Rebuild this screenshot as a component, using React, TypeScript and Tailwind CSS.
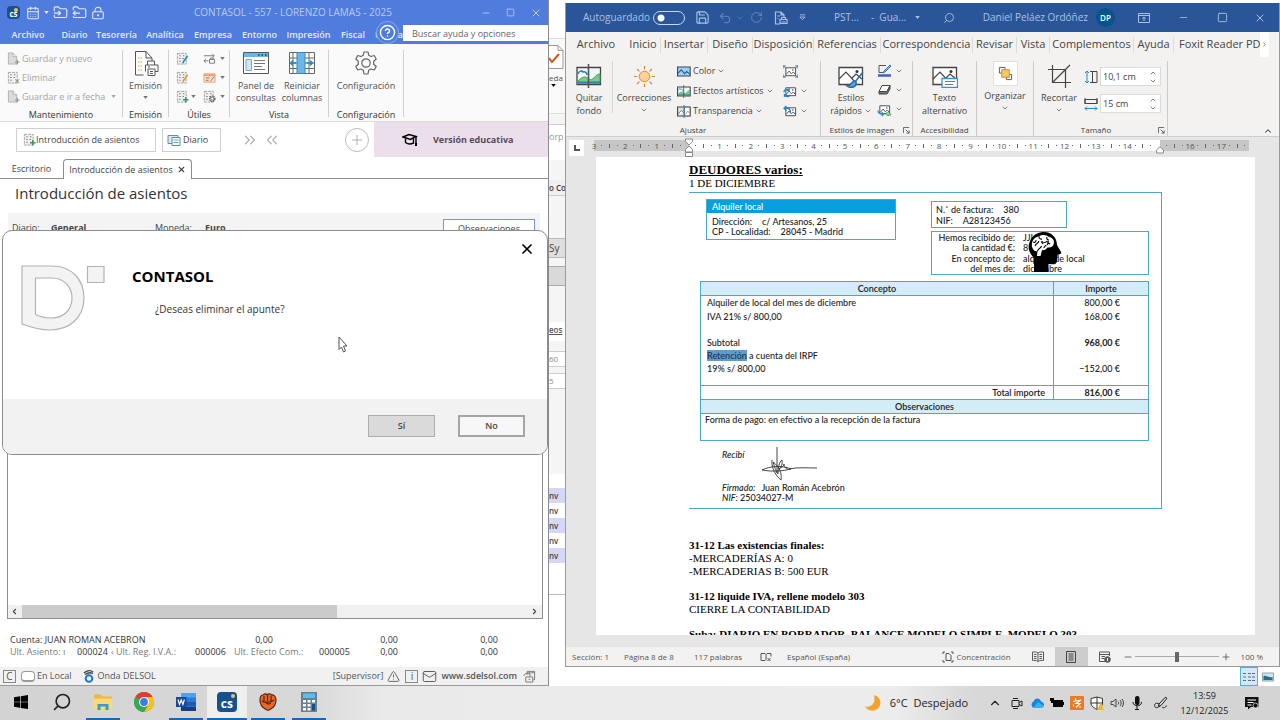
import type { ReactNode } from "react";
import {
  CalendarDays,
  ChevronDown,
  ChevronLeft,
  ChevronRight,
  ChevronUp,
  ChevronsLeft,
  ChevronsRight,
  CircleHelp,
  FolderInput,
  FolderOutput,
  LockKeyhole,
  Mail,
  Minus,
  Plus,
  RotateCw,
  Save,
  Search,
  Square,
  TriangleAlert,
  Undo2,
  X,
} from "lucide-react";

/* ---------- small drawings ---------- */

type IconProps = { className?: string };

function Caret({ className = "" }: IconProps) {
  return (
    <svg viewBox="0 0 6 4" className={`h-[3px] w-[5px] shrink-0 ${className}`} aria-hidden="true">
      <path d="M0 0h6L3 4z" fill="currentColor" />
    </svg>
  );
}

function CsLogo({ className = "" }: IconProps) {
  return (
    <span className={`relative flex shrink-0 items-end justify-center overflow-hidden bg-[#17518f] font-bold leading-none text-white ${className}`}>
      <span className="absolute right-0.5 top-0.5 size-1 rounded-full bg-[#f0c05a]" />
      cs
    </span>
  );
}

function PageIcon() {
  return (
    <svg viewBox="0 0 14 14" className="size-[13px] shrink-0" fill="none" aria-hidden="true">
      <path d="M1.500 1h5l4 4v8h-9z" fill="#dcdcdc" stroke="#b0b0b0" />
      <path d="M6.500 1v4h4" stroke="#b0b0b0" fill="#f4f4f4" />
      <path d="M11 8.500v5M8.500 11h5" stroke="#999" strokeWidth="1.400" />
    </svg>
  );
}

function SheetIcon({ mark }: { mark: "x" | "pen-blue" | "pen-orange" | "green" | "gear" }) {
  return (
    <svg viewBox="0 0 14 14" className="size-[13px] shrink-0" fill="none" aria-hidden="true">
      <path d="M1.500 1.500h9.500v11.500h-9.500z" stroke="#a0a0a0" fill="#f1f1f1" strokeDasharray="3 1" />
      <path d="M3.500 4h1.500M7.500 4h1.500M3.500 7h1.500M7 7h1.500M3.500 10h1.500" stroke="#777" strokeWidth="1.200" />
      {mark === "x" && <path d="M9 9l4 4M13 9l-4 4" stroke="#9a9a9a" strokeWidth="1.200" />}
      {mark === "pen-blue" && <path d="M12.500 4L8 10.500l-.5 1.500" stroke="#2b8fcd" strokeWidth="1.800" />}
      {mark === "pen-orange" && <path d="M12.500 4L8 10.500l-.5 1.500" stroke="#e19a3c" strokeWidth="1.800" />}
      {mark === "green" && <path d="M10.500 7.500v6M7.500 10.500h6" stroke="#2f9b5c" strokeWidth="1.600" />}
      {mark === "gear" && (
        <>
          <circle cx="10" cy="9.500" r="2.800" stroke="#666" strokeDasharray="1.400 .6" strokeWidth="1.600" />
          <circle cx="10" cy="9.500" r="1.600" stroke="#666" strokeWidth=".8" fill="#fff" />
        </>
      )}
    </svg>
  );
}

function SwapIcon() {
  return (
    <svg viewBox="0 0 14 12" className="h-3 w-[13px] shrink-0" fill="none" stroke="#777" aria-hidden="true">
      <path d="M1 2.500h11M10 .5l2 2-2 2M6 8H1M3 6L1 8l2 2M7 6.500h5.500v4H7zM8 6.500V5h3.500v1.500" />
    </svg>
  );
}

function CardIcon() {
  return (
    <svg viewBox="0 0 14 12" className="h-3 w-[13px] shrink-0" fill="none" aria-hidden="true">
      <path d="M1 1.500h12v9H1z" fill="#fbe3d0" stroke="#ec9f6c" />
      <path d="M1 2h12v2H1z" fill="#ec9f6c" />
      <path d="M3 6h4M3 8.500h3M8 9.500l4-5" stroke="#8a6d5c" />
    </svg>
  );
}

function EmissionIcon() {
  return (
    <svg viewBox="0 0 26 26" className="size-[26px]" fill="none" stroke="#555" aria-hidden="true">
      <path d="M10.500 25H2.500V1.500H13L19 8v3M13 1.500V8h6" />
      <path d="M5 8h4M5 12h5M5 16h4M5 20h4" stroke="#c4ad54" strokeDasharray="1.500 1" />
      <path d="M14.500 15v-4h7v4M12.500 21.500v-6.500h12.500v6.500h-3M15 19h7v6.500h-7z" fill="#fff" />
      <path d="M15 17h2M17 21.500h3M17 23.500h3" />
    </svg>
  );
}

function PanelIcon() {
  return (
    <svg viewBox="0 0 26 24" className="h-6 w-[26px]" fill="none" aria-hidden="true">
      <path d="M.5 1.500h25v21H.5z" fill="#fff" stroke="#555" />
      <path d="M1 2h24v4H1z" fill="#6db7e8" />
      <path d="M15 4h1.500M18.500 4H20M22 4h1.500" stroke="#234" strokeWidth="1.400" />
      <path d="M3 8.500h5.500v11H3z" fill="#cfe7f8" stroke="#7ab" />
      <path d="M11 9.500h11M11 12.500h11M11 15.500h8M11 18.500h11" stroke="#777" />
    </svg>
  );
}

function ColumnsIcon() {
  return (
    <svg viewBox="0 0 26 24" className="h-6 w-[26px]" fill="none" aria-hidden="true">
      <path d="M.5 1.500h25v21H.5zM.5 7h25M.5 12h25M.5 17.500h25M20 1.500v21M4 1.500v21" stroke="#666" fill="#fff" />
      <path d="M8 1.500h8v21H8z" fill="#6db7e8" stroke="#3489bd" />
      <path d="M7 12H1.500M4 9.500L1.500 12 4 14.500M17.500 12h6M21 9.500l2.500 2.500-2.500 2.500" stroke="#2487c8" strokeWidth="1.400" />
    </svg>
  );
}

function GearIcon() {
  return (
    <svg viewBox="0 0 24 24" className="size-6" fill="none" stroke="#666" strokeWidth="1.200" strokeLinejoin="round" aria-hidden="true">
      <path d="M10 1h4l.7 3.200 2.300 1.300 3.200-1 2 3.500-2.500 2.300v2.900l2.500 2.300-2 3.500-3.200-1-2.300 1.300L14 23h-4l-.7-3.700L7 18l-3.200 1-2-3.500 2.500-2.300v-2.900L1.800 8l2-3.500 3.200 1 2.300-1.300z" />
      <circle cx="12" cy="12" r="4.200" />
    </svg>
  );
}

function CapIcon() {
  return (
    <svg viewBox="0 0 16 14" className="h-3.5 w-4" fill="none" stroke="#000" aria-hidden="true">
      <path d="M1 4l6-2.500L14 3.500 8.500 6.500z" strokeWidth="1.500" />
      <path d="M3.500 5.500v4c2 1.500 5 2 8 .5V5.500M14 4v7" strokeWidth="1.400" />
      <path d="M13 10h2v3h-2z" fill="#000" stroke="none" />
    </svg>
  );
}

function PictureIcon({ variant }: { variant: "split" | "blue" | "half" | "grey" | "brush" | "alt" }) {
  const big = variant === "split" || variant === "brush" || variant === "alt";
  return (
    <svg viewBox="0 0 26 24" className={big ? "h-6 w-[26px]" : "h-[13px] w-3.5"} fill="none" aria-hidden="true">
      <path
        d="M1 3.500h23.500v17H1z"
        fill={variant === "blue" ? "#9dd0f2" : variant === "brush" || variant === "alt" ? "#fff" : variant === "grey" ? "#e2e2e2" : "#eef7fc"}
        stroke="#444"
        strokeWidth={big ? 1.3 : 2}
      />
      {(variant === "split" || variant === "half") && (
        <>
          <path d="M2 17c5-5 7-5 11-2s6-5 11-5v9H2z" fill="#7cc98a" stroke="#4a9c5c" />
          <path d="M2 10c1-3 4-4 5-2 2-1 4 1 4 3" stroke="#2b7cb8" strokeWidth="1.600" fill="#fff" />
          <path d="M2 18.500h22" stroke="#2b7cb8" strokeWidth="2" />
          <path d="M12.500 0v24" stroke="#555" strokeWidth="1.600" />
        </>
      )}
      {variant === "grey" && (
        <>
          <path d="M2 17l6-7 5 5M14 4h10v16H14z" fill="#fff" stroke="#666" strokeWidth="1.600" />
          <path d="M13 0v24" stroke="#2b7cb8" strokeWidth="2" />
          <path d="M16 17l4-6 3 4" stroke="#c78d61" strokeWidth="1.600" />
        </>
      )}
      {variant === "blue" && <path d="M2 15l6-6 6 7 4-4 6 5" stroke="#1d5f9c" strokeWidth="2" />}
      {(variant === "brush" || variant === "alt") && (
        <>
          <path d="M1 15l7-7 10 11M14 14l4-4 6 5" stroke="#444" strokeWidth="1.200" />
          <circle cx="19" cy="7.500" r="1.500" fill="#333" />
        </>
      )}
      {variant === "brush" && <path d="M25 8l-8 10M17 17c-4 0-3 5-8 5 4 3 10 1 9-4z" fill="#5aa3dc" stroke="#286fa8" strokeWidth="1.500" />}
      {variant === "alt" && (
        <>
          <path d="M10 14.500h15.500v9H10z" fill="#fff" stroke="#3c93c8" strokeWidth="1.300" />
          <path d="M13 17.500h10M13 20.500h8" stroke="#777" />
        </>
      )}
    </svg>
  );
}

function SmallPicture({ kind }: { kind: "compress" | "change" | "reset" | "layout" }) {
  return (
    <svg viewBox="0 0 16 14" className="h-[13px] w-[15px]" fill="none" aria-hidden="true">
      <path d="M3 3h10.500v8.500H3z" stroke="#444" fill="#fff" />
      <path d="M3.500 10l3-3.500 2.500 3 2-2 2 2.500" stroke="#555" />
      <circle cx="10.500" cy="5.500" r=".8" fill="#444" />
      {kind === "compress" && <path d="M0 1l3 2M16 1l-2.500 2M0 13l3-1.500M16 13l-2.500-1.500M0 4V1h3M13 1h3v3M0 10v3h3M16 10v3h-3" stroke="#2f7cb7" />}
      {kind === "change" && <path d="M1 8a3 3 0 015-2.500M7.500 10.500a3 3 0 01-5.500.5M6.500 3v3H4M1.500 13v-2.500H4" stroke="#2487c8" strokeWidth="1.400" />}
      {kind === "reset" && <path d="M1 3.500h3.500c3 0 3.500 2 3.500 5M3.500 1L1 3.500 3.500 6" stroke="#2487c8" strokeWidth="1.400" />}
      {kind === "layout" && (
        <>
          <path d="M1 8c0 3 3 4 6 4M5 10l2 2-2 2" stroke="#2487c8" strokeWidth="1.300" />
          <path d="M9 11.500c2-2 5-1 6 1-2 1.500-5 1-6-1z" fill="#a5dba8" stroke="#3f9a4c" />
        </>
      )}
    </svg>
  );
}

function SunIcon() {
  return (
    <svg viewBox="0 0 24 24" className="size-[23px]" fill="none" aria-hidden="true">
      <circle cx="12" cy="12" r="5.500" fill="#fbd68a" stroke="#d68a2c" />
      <path d="M12 1v3.500M12 19.500V23M1 12h3.500M19.500 12H23M4.200 4.200l2.500 2.500M17.300 17.300l2.500 2.500M4.200 19.800l2.500-2.500M17.300 6.700l2.500-2.500" stroke="#d9822b" strokeWidth="1.200" />
    </svg>
  );
}

function OutlinePen() {
  return (
    <svg viewBox="0 0 15 13" className="h-[13px] w-[15px]" fill="none" aria-hidden="true">
      <path d="M9 1.500H2v7h4" stroke="#555" />
      <path d="M13 1L7 7l-1 2 2-1 6-6z" fill="#8cc4ee" stroke="#2b78b8" />
      <path d="M1 11.500h13" stroke="#3c60c4" strokeWidth="2.500" />
    </svg>
  );
}

function EffectBox() {
  return (
    <svg viewBox="0 0 15 13" className="h-[13px] w-[15px]" fill="none" stroke="#444" aria-hidden="true">
      <path d="M5 2.500h8l-3 6H2z" fill="#fff" />
      <path d="M2 8.500V11h8l3-5V2.500l-3 6z" fill="#777" />
    </svg>
  );
}

function ArrangeIcon() {
  return (
    <svg viewBox="0 0 16 16" className="size-[15px]" fill="none" aria-hidden="true">
      <path d="M1.500 1.500h6v6h-6zM9 9h5.500v5.500H9z" stroke="#555" fill="#fff" />
      <path d="M4 4h8v8H4z" fill="#fbc765" stroke="#d6872b" />
    </svg>
  );
}

function CropIcon() {
  return (
    <svg viewBox="0 0 24 24" className="size-6" fill="none" stroke="#444" aria-hidden="true">
      <path d="M5.500 1v17.500H24M1 5.500h17.500V24M6 18L23 1" strokeWidth="1.200" />
    </svg>
  );
}

function SizeIcon({ vertical = false }: { vertical?: boolean }) {
  return (
    <svg viewBox="0 0 14 14" className="size-[14px] shrink-0" fill="none" aria-hidden="true">
      {vertical ? (
        <>
          <path d="M6 1.500h3M6 12.500h3M8.500 1.500h4.500v11H8.500z" stroke="#444" />
          <path d="M3 1v12M1 3l2-2 2 2M1 11l2 2 2-2" stroke="#2487c8" />
        </>
      ) : (
        <>
          <path d="M1 1v6M13 1v6M1 2.500h12v4H1z" stroke="#444" />
          <path d="M1 11.500h12M3 9.500l-2 2 2 2M11 9.500l2 2-2 2" stroke="#2487c8" />
        </>
      )}
    </svg>
  );
}

function Launcher() {
  return (
    <svg viewBox="0 0 8 8" className="size-[7px]" fill="none" stroke="#555" aria-hidden="true">
      <path d="M.5 7V.5H7M3 3l4 4M7 4v3H4" />
    </svg>
  );
}

function HeadIcon() {
  return (
    <svg viewBox="0 0 34 40" className="h-10 w-[34px]" aria-hidden="true">
      <path d="M6 40V26C1 21-1 15 2 9 5 2 11 0 16 0c8 0 13 6 13 13l4 7c.6 1.200 0 2-1.500 2.200L29.500 23l-.5 6c-.3 2.500-2 3.500-4.500 3.300L20.500 32v8z" fill="#000" />
      <path d="M5 17C2 12 5 5 11 4.500c3-2.500 8-1.500 10 .5 4 .5 6 4 4.500 7.500-1 3-4 3-6 3-1 2-4 3-5.500 2.500L12.500 24H9l.5-5C8 19.500 6 19 5 17z" fill="#fff" />
      <path d="M7 14c1-3 3-2 4-5M11 4.500c0 2 1.500 3 3 2.500M9.500 19c1-3 3-2 4-5M14 12c2-3 3 0 5-3M19 5c-1 2 1 3 2 3M22 12c-1-1-2-1-3 1M5 10c2 1 3 0 3-2M16 16c0-2 2-2 2-3" fill="none" stroke="#000" strokeWidth="1.100" />
      <circle cx="14" cy="10" r="1" />
      <circle cx="20" cy="10" r="1" />
    </svg>
  );
}

function Signature() {
  return (
    <svg viewBox="0 0 58 36" className="h-9 w-[58px]" fill="none" stroke="#333" aria-hidden="true">
      <path d="M17 1v26M2 24c8-4 20-5 29-1-8 2-18 3-29 1zM29 23c9-2 18-1 28-1" strokeWidth=".9" />
      <path d="M12 14c-1 8 4 16 9 20 1-6-1-13-8-18 2 6 3 10 5 12 0-6 1-12 4-14 1 4-1 7-3 9 3-2 5-3 5-5 0 4 2 4 4 5" strokeWidth=".9" />
    </svg>
  );
}

/* ---------- accounting window ---------- */

function Divider() {
  return <span className="my-1 w-px shrink-0 self-stretch bg-[#cfcfcf]" />;
}

function BigButton({ icon, lines, caret, className }: { icon: ReactNode; lines: string[]; caret?: boolean; className: string }) {
  return (
    <button className={`flex flex-col items-center pt-[3px] text-center text-[9px] leading-3 text-[#505050] ${className}`}>
      <span className="flex h-[27px] items-center">{icon}</span>
      <span className="pt-1">
        {lines.map((line) => (
          <span key={line} className="block whitespace-nowrap">{line}</span>
        ))}
      </span>
      {caret && <Caret className="mt-1 text-[#777]" />}
    </button>
  );
}

function Group({ title, className, children }: { title: string; className: string; children: ReactNode }) {
  return (
    <section className={`flex shrink-0 flex-col justify-between ${className}`}>
      <div className="flex">{children}</div>
      <h2 className="text-center text-[9px] leading-3 text-[#333]">{title}</h2>
    </section>
  );
}

const accountingMenu = [
  ["Archivo", "w-[56px]"],
  ["Diario", "w-[37px]"],
  ["Tesorería", "w-[47px]"],
  ["Analítica", "w-[50px]"],
  ["Empresa", "w-[46px]"],
  ["Entorno", "w-[47px]"],
  ["Impresión", "w-[51px]"],
  ["Fiscal", "w-[38px]"],
];

function AccountingWindow() {
  return (
    <section className="relative flex min-w-0 flex-col overflow-hidden border-r border-[#8a8a8a] bg-white font-['Open_Sans','Noto_Sans',sans-serif] text-[9px] text-[#444]">
      <header className="bg-[#4f7cdd] text-[#e3ebfc]">
        <div className="flex h-[25px] items-center pl-[7px]">
          <CsLogo className="size-[13px] rounded-sm pb-px text-[8px]" />
          <CalendarDays className="ml-1.5 size-3.5" strokeWidth={1.8} />
          <Caret className="ml-1" />
          <FolderInput className="ml-1 size-[15px]" strokeWidth={1.8} />
          <FolderOutput className="ml-1 size-[15px]" strokeWidth={1.8} />
          <LockKeyhole className="ml-1 size-[14px]" strokeWidth={1.8} />
          <h1 className="flex-1 text-center text-[10px] text-[#b9caf3]">CONTASOL - 557 - LORENZO LAMAS - 2025</h1>
          <div className="flex w-[67px] items-center gap-[15px] text-[#c0cff3]">
            <button aria-label="Minimizar"><Minus className="size-2.5" /></button>
            <button aria-label="Maximizar"><Square className="size-[9px]" /></button>
            <button aria-label="Cerrar"><X className="size-3" /></button>
          </div>
        </div>
        <nav className="flex h-[19px] items-center whitespace-nowrap font-semibold">
          {accountingMenu.map(([label, width]) => (
            <a key={label} href="#" className={`shrink-0 text-center ${width}`}>{label}</a>
          ))}
          <span className="relative flex min-w-0 flex-1 items-center justify-between pl-[3px]">
            <span>U</span>
            <span>a</span>
            <button aria-label="Ayuda" className="absolute -top-[7px] left-1 rounded-full border border-[#8eaaea] bg-[#4f7cdd] p-0.5 text-white">
              <CircleHelp className="size-[17px]" />
            </button>
          </span>
          <input
            aria-label="Buscar ayuda y opciones"
            placeholder="Buscar ayuda y opciones"
            className="h-4 w-[145px] shrink-0 self-start bg-white pl-[9px] text-[9px] font-normal text-[#444] placeholder:text-[#666]"
          />
        </nav>
      </header>

      <div className="flex h-[78px] shrink-0 border-b border-[#dcdcdc] bg-[#fafafa] pt-0.5">
        <Group title="Mantenimiento" className="w-[122px]">
          <div className="flex flex-col pl-[7px] pt-[3px] text-[#a5a5a5]">
            <button className="flex h-[19px] items-center gap-0.5"><PageIcon />Guardar y nuevo</button>
            <button className="flex h-[19px] items-center gap-0.5"><SheetIcon mark="x" />Eliminar</button>
            <button className="flex h-[19px] items-center gap-0.5"><PageIcon />Guardar e ir a fecha<Caret className="ml-1" /></button>
          </div>
        </Group>
        <Divider />
        <Group title="Emisión" className="w-[45px]">
          <BigButton className="w-full" icon={<EmissionIcon />} lines={["Emisión"]} caret />
        </Group>
        <Divider />
        <Group title="Útiles" className="w-[60px]">
          <div className="grid w-full grid-cols-2 pl-[7px] pt-[3px] text-[#777]">
            <button aria-label="Editar asiento" className="flex h-[19px] items-center"><SheetIcon mark="pen-blue" /></button>
            <button aria-label="Intercambiar" className="flex h-[19px] items-center gap-1"><SwapIcon /><Caret /></button>
            <button aria-label="Modificar" className="flex h-[19px] items-center"><SheetIcon mark="pen-orange" /></button>
            <button aria-label="Tarjetas" className="flex h-[19px] items-center gap-1"><CardIcon /><Caret /></button>
            <button aria-label="Añadir" className="flex h-[19px] items-center gap-0.5"><SheetIcon mark="green" /><Caret /></button>
            <button aria-label="Opciones" className="flex h-[19px] items-center gap-1"><SheetIcon mark="gear" /><Caret /></button>
          </div>
        </Group>
        <Divider />
        <Group title="Vista" className="w-[98px]">
          <BigButton className="w-[52px]" icon={<PanelIcon />} lines={["Panel de", "consultas"]} />
          <BigButton className="w-[40px]" icon={<ColumnsIcon />} lines={["Reiniciar", "columnas"]} />
        </Group>
        <Divider />
        <Group title="Configuración" className="w-[74px]">
          <BigButton className="w-full" icon={<GearIcon />} lines={["Configuración"]} />
        </Group>
        <Divider />
      </div>

      <div className="flex h-[35px] shrink-0 items-center pl-4">
        <button className="flex h-6 w-[140px] items-center border border-[#cfcfcf] pl-1.5"><SheetIcon mark="green" />Introducción de asientos</button>
        <button className="ml-1.5 flex h-6 w-[59px] items-center gap-0.5 border border-[#cfcfcf] pl-1">
          <svg viewBox="0 0 14 12" className="h-3 w-3.5" fill="none" aria-hidden="true">
            <path d="M1 1.500h10v8H1z" fill="#d6ecf3" stroke="#789" />
            <path d="M5 3.500h8v8H5z" fill="#fff" stroke="#568f9c" />
            <path d="M6.500 6h5M6.500 8.500h5" stroke="#5aa6b8" />
          </svg>
          Diario
        </button>
        <button aria-label="Avanzar" className="ml-5 text-[#b5b5b5]"><ChevronsRight className="size-[18px]" strokeWidth={1.8} /></button>
        <button aria-label="Retroceder" className="ml-1 text-[#b5b5b5]"><ChevronsLeft className="size-[18px]" strokeWidth={1.8} /></button>
        <div className="flex flex-1 justify-end pr-[5px]">
          <button aria-label="Añadir acceso" className="rounded-full border border-[#bcbcbc] p-[3px] text-[#a5a5a5]"><Plus className="size-4" strokeWidth={1.3} /></button>
        </div>
        <div className="flex h-full w-[174px] items-center bg-[#ecdfec] pl-7 text-[9px] font-bold text-[#594a5a]">
          <CapIcon />
          <span className="ml-[15px]">Versión educativa</span>
        </div>
      </div>

      <div role="tablist" className="flex h-[22px] shrink-0 items-end">
        <button role="tab" aria-selected="false" className="h-full w-[63px] border-b border-[#8c8c8c] pt-0.5 text-center">Escritorio</button>
        <button role="tab" aria-selected="true" className="flex h-[20px] w-[129px] items-center justify-center gap-1 rounded-t border border-b-0 border-[#8c8c8c]">
          Introducción de asientos<X className="size-[9px]" strokeWidth={3} />
        </button>
        <span className="h-full flex-1 border-b border-[#8c8c8c]" />
      </div>

      <h2 className="h-[34px] shrink-0 pl-[15px] pt-0.5 text-[15px] leading-6 text-[#333]">Introducción de asientos</h2>
      <div className="mx-2 flex h-8 shrink-0 items-start bg-[#f4f4f4] pl-1 pt-2 leading-[14px]">
        <span className="w-[39px]">Diario:</span>
        <strong className="w-[104px]">General</strong>
        <span className="w-[50px]">Moneda:</span>
        <strong className="flex-1">Euro</strong>
        <button className="-mt-0.5 mr-[5px] h-5 w-[92px] border border-[#7c95d4] bg-white">Observaciones</button>
      </div>

      <div className="ml-[7px] mr-[5px] flex min-h-0 flex-1 flex-col justify-end border border-t-0 border-[#8f8f8f]">
        <div className="flex h-[13px] items-center bg-[#f0f0f0] text-[#444]">
          <button aria-label="Desplazar a la izquierda" className="w-3.5 pl-0.5"><ChevronLeft className="size-[9px]" strokeWidth={3} /></button>
          <span className="h-full w-[59%] bg-[#cbcbcb]" />
          <span className="flex-1" />
          <button aria-label="Desplazar a la derecha" className="w-3"><ChevronRight className="size-[9px]" strokeWidth={3} /></button>
        </div>
      </div>

      <div className="h-12 shrink-0 pl-2.5 pr-[50px] pt-[15px] leading-3">
        <div className="flex text-[#333]">
          <span className="flex-1 whitespace-nowrap">Cuenta: JUAN ROMAN ACEBRON</span>
          <span className="w-[100px] text-right">0,00</span>
          <span className="w-[125px] text-right">0,00</span>
          <span className="w-[100px] text-right">0,00</span>
        </div>
        <div className="flex whitespace-nowrap text-[#777]">
          <span className="w-[67px]">Ult. Asiento: ı</span>
          <span className="w-[34px] text-[#333]">000024</span>
          <span className="w-[84px]">‹ Ult. Reg. I.V.A.:</span>
          <span className="w-[39px] text-[#333]">000006</span>
          <span className="w-[85px]">Ult. Efecto Com.:</span>
          <span className="flex-1 text-[#333]">000005</span>
          <span className="w-9 text-right text-[#333]">0,00</span>
          <span className="w-[100px] text-right text-[#333]">0,00</span>
        </div>
      </div>

      <footer className="flex h-[19px] shrink-0 items-center border-b border-[#999] bg-[#f1f1f1] pl-[3px] pr-3 text-[#555]">
        <span className="flex size-[13px] items-center justify-center border border-[#888] text-[10px] leading-none">C</span>
        <span className="ml-[5px] h-[11px] w-[14px] rounded-sm border border-b-2 border-[#999] bg-white" />
        <span className="ml-0.5">En Local</span>
        <svg viewBox="0 0 12 14" className="ml-[11px] h-3.5 w-3" fill="none" aria-hidden="true">
          <circle cx="6" cy="9.500" r="3.300" stroke="#1b79c4" strokeWidth="2" />
          <path d="M1 4c3-3 7-3 9-1M2 5.500c3-2 6-2 8-1" stroke="#444" strokeWidth="1.300" />
        </svg>
        <span className="ml-[3px] flex-1">Onda DELSOL</span>
        <span>[Supervisor]</span>
        <TriangleAlert className="ml-1 size-[13px]" strokeWidth={1.6} />
        <span className="ml-[5px] flex size-[13px] items-center justify-center border border-[#888] text-[10px] leading-none">i</span>
        <Mail className="ml-1 size-[15px]" strokeWidth={1.5} />
        <a href="#" className="ml-1 font-semibold">www.sdelsol.com</a>
        <svg viewBox="0 0 14 14" className="ml-1.5 size-[13px]" fill="none" stroke="#777" aria-hidden="true">
          <path d="M4.500 5V1.500h8v9H11M4.500 3h8M3 7.500h7.500v5.500H3zM.5 6.500l2-2.500h5v3.500M6 10h2" />
        </svg>
      </footer>

      <ConfirmDialog />
    </section>
  );
}

function ConfirmDialog() {
  return (
    <div role="dialog" aria-labelledby="dialog-title" className="absolute left-0.5 right-0 top-[230px] flex h-[225px] flex-col overflow-hidden rounded-[10px] border border-[#8c8c8c] bg-white">
      <div className="flex flex-1 pl-[18px] pr-3">
        <svg viewBox="0 0 84 68" className="mt-[34px] h-[68px] w-[84px] shrink-0" fill="#f3f3f3" stroke="#b2b2b2" strokeWidth="1.200" aria-hidden="true">
          <path fillRule="evenodd" d="M1 1h30c20 0 32 14 32 32 0 20-15 32-34 32-10 0-20-3-28-6zM14.500 13v36.500c5 2.500 10 3.500 16 3.500 12 0 20.500-8 20.500-20 0-11-8-20-20-20z" />
          <path d="M66.500 1.500h16.500v16H66.500z" />
        </svg>
        <div className="flex-1 pl-[27px] pt-[35px]">
          <h2 id="dialog-title" className="text-[15px] font-bold leading-5 text-black">CONTASOL</h2>
          <p className="pl-[23px] pt-[15px] text-[10px] leading-4 text-[#333]">¿Deseas eliminar el apunte?</p>
        </div>
        <button aria-label="Cerrar" className="mt-2.5 size-4 text-black"><X className="size-4" strokeWidth={2.6} /></button>
      </div>
      <div className="flex h-[55px] shrink-0 justify-end gap-[23px] bg-[#f2f2f2] pr-[22px] pt-4">
        <button className="h-[22px] w-[67px] border border-[#adadad] bg-[#dadada] font-semibold">Sí</button>
        <button className="h-[22px] w-[67px] border-2 border-[#a5a5a5] bg-[#f7f7f7] font-semibold">No</button>
      </div>
      <svg viewBox="0 0 10 18" className="absolute left-[335px] top-[105px] h-[18px] w-2.5" fill="#fff" stroke="#555" aria-hidden="true">
        <path d="M1 1v12.500l2.500-2.500 2 5 2-1-2-5h3.500z" />
      </svg>
    </div>
  );
}

/* ---------- window peeking out between the other two ---------- */

function BackgroundStrip() {
  return (
    <aside className="flex min-w-0 flex-col overflow-hidden whitespace-nowrap bg-[#f5f5f5] font-['Open_Sans','Noto_Sans',sans-serif] text-[8px] text-[#555]">
      <div className="h-[38px] shrink-0 bg-white" />
      <div className="h-[76px] shrink-0 border-b border-t border-[#dcdcdc] bg-[#f9f9f9] pt-[5px]">
        <svg viewBox="0 0 16 26" className="h-[26px] w-4" fill="none" aria-hidden="true">
          <path d="M-2 1.500h11l5 5v18H-2M9 1.500v5h5" fill="#fff" stroke="#999" />
          <path d="M0 14l3 4 7-8" stroke="#d2541f" strokeWidth="2" />
        </svg>
        <p className="pt-0.5">eda</p>
        <Caret className="ml-0.5 text-black" />
      </div>
      <div className="mt-2.5 h-9 shrink-0 border-t border-[#ccc] bg-white pt-[5px] text-[9px] text-[#999]">orp</div>
      <div className="mt-5 h-4 shrink-0 border-b border-[#ccc] bg-[#f0f0f0] font-semibold leading-4 text-[#333]">o Co</div>
      <div className="mt-[42px] h-5 shrink-0 border border-x-0 border-[#bbb] bg-[#dedede] text-[10px] leading-[18px] text-[#444]">Sy</div>
      <div className="mt-2 h-5 shrink-0 border border-x-0 border-[#aaa] bg-[#d9d9d9]" />
      <div className="mt-9 h-[19px] shrink-0 bg-white pt-0.5 text-[8px] font-semibold underline">eos</div>
      <div className="mt-2.5 h-4 shrink-0 border border-x-0 border-[#ccc] bg-white leading-[14px] text-[#888]">60</div>
      <div className="mt-1.5 h-4 shrink-0 border border-x-0 border-[#ccc] bg-white leading-[14px] text-[#888]">5</div>
      <div className="mt-[85px] flex h-[120px] shrink-0 flex-col bg-white pt-3.5 font-semibold leading-[15px] text-[#444]">
        {["bg-[#d7d7f5]", "bg-white", "bg-[#d7d7f5]", "bg-white", "bg-[#d7d7f5]"].map((tone, i) => (
          <span key={i} className={`h-[15px] ${tone}`}>nv</span>
        ))}
      </div>
      <div className="flex-1 border-t border-[#bbb] bg-white" />
    </aside>
  );
}

/* ---------- word processor window ---------- */

const wordTabs = [
  ["Archivo", "w-[60px]"],
  ["Inicio", "w-[35px] border-r"],
  ["Insertar", "w-[47px] border-r"],
  ["Diseño", "w-[45px] border-r"],
  ["Disposición", "w-[61px] border-r"],
  ["Referencias", "w-[67px] border-r"],
  ["Correspondencia", "w-[92px] border-r"],
  ["Revisar", "w-[44px] border-r"],
  ["Vista", "w-[33px] border-r"],
  ["Complementos", "w-[84px] border-r"],
  ["Ayuda", "w-[40px] border-r"],
];

function WordTool({ icon, lines, className, caret }: { icon: ReactNode; lines: string[]; className: string; caret?: boolean }) {
  return (
    <button className={`flex shrink-0 flex-col items-center whitespace-nowrap pt-0.5 text-[9px] leading-[13px] ${className}`}>
      <span className="flex h-[26px] items-center">{icon}</span>
      <span className="pt-0.5">
        {lines.map((line) => (
          <span key={line} className="block">{line}</span>
        ))}
      </span>
      {caret && <ChevronDown className="mt-0.5 size-2" />}
    </button>
  );
}

function WordGroup({ title, className, launcher, children }: { title: string; className: string; launcher?: boolean; children: ReactNode }) {
  return (
    <section className={`flex shrink-0 flex-col justify-between border-r border-[#cdcbc9] ${className}`}>
      <div className="flex">{children}</div>
      <div className="flex h-3 items-center">
        <h2 className="flex-1 whitespace-nowrap text-center text-[8px]">{title}</h2>
        {launcher && <button aria-label={`Opciones de ${title}`} className="w-[9px]"><Launcher /></button>}
      </div>
    </section>
  );
}

const rulerLabels = ["3", "2", "1", "", "1", "2", "3", "4", "5", "6", "7", "8", "9", "10", "11", "12", "13", "14", "", "16", "17"];

function Ruler() {
  return (
    <div className="flex h-[17px] shrink-0 items-start bg-[#e6e6e6]">
      <button aria-label="Tabulación izquierda" className="ml-[3px] flex h-4 w-[15px] items-center justify-center bg-white">
        <svg viewBox="0 0 6 6" className="size-1.5" fill="none" stroke="#555" strokeWidth="2" aria-hidden="true"><path d="M1 0v5h5" /></svg>
      </button>
      <div className="relative ml-1.5 mr-[30px] flex h-[11px] flex-1 bg-[linear-gradient(to_right,#e6e6e6_0.6%,#c6c6c6_0.6%,#c6c6c6_15%,#ffffff_15%,#ffffff_86.5%,#c6c6c6_86.5%)] text-[8px] leading-[11px] text-[#555]">
        {rulerLabels.map((label, i) => (
          <span key={i} className="grid flex-1 grid-cols-4">
            <span className="flex justify-center">{label}</span>
            <span className="flex items-center justify-center"><i className="size-px bg-[#666]" /></span>
            <span className="flex items-center justify-center"><i className="h-1 w-px bg-[#666]" /></span>
            <span className="flex items-center justify-center"><i className="size-px bg-[#666]" /></span>
          </span>
        ))}
        <svg viewBox="0 0 10 20" className="absolute -top-0.5 left-[14.2%] h-5 w-2.5" fill="#fff" stroke="#888" aria-hidden="true">
          <path d="M1.500 1h7v2.500L5 7 1.500 3.500zM1.500 14v-2.500L5 8l3.500 3.500V14zM1.500 14.500h7v4h-7z" />
        </svg>
        <svg viewBox="0 0 10 8" className="absolute left-[85.8%] top-1.5 h-2 w-2.5" fill="#fff" stroke="#888" aria-hidden="true">
          <path d="M1.500 7V4L5 .8 8.500 4v3z" />
        </svg>
      </div>
    </div>
  );
}

function Invoice() {
  return (
    <figure className="relative flex h-[317px] w-[473px] shrink-0 flex-col border border-l-0 border-[#4aa8c8] font-[Lato,'Open_Sans',sans-serif] text-[9px] font-medium leading-[10px] text-[#222]">
      <div className="flex h-[88px] items-start justify-between pl-[17px] pr-3">
        <div className="mt-1.5 h-[41px] w-[190px] border border-[#4aa8c8]">
          <h3 className="bg-[#079fdd] pl-[5px] leading-[13px] text-white">Alquiler local</h3>
          <p className="pl-[5px] pt-1"><span className="mr-2.5">Dirección:</span>c/ Artesanos, 25</p>
          <p className="pl-[5px]"><span className="mr-2.5">CP - Localidad:</span>28045 - Madrid</p>
        </div>
        <div className="mt-2 w-[218px]">
          <div className="h-[27px] w-[136px] border border-[#4aa8c8] pl-1 pt-0.5 leading-[11px]">
            <p><span className="mr-2.5">N.˚ de factura:</span>380</p>
            <p><span className="mr-2.5">NIF:</span>A28123456</p>
          </div>
          <dl className="mt-[3px] grid h-[44px] grid-cols-[79px_1fr] gap-x-2 border border-[#4aa8c8] pl-1 pt-px">
            <dt className="text-right">Hemos recibido de:</dt><dd>JJI</dd>
            <dt className="text-right">la cantidad €:</dt><dd>8</dd>
            <dt className="text-right">En concepto de:</dt><dd>alquiler de local</dd>
            <dt className="text-right">del mes de:</dt><dd>diciembre</dd>
          </dl>
        </div>
      </div>
      <table className="ml-[11px] w-[449px] table-fixed border-collapse border border-[#4aa8c8]">
        <colgroup>
          <col />
          <col className="w-[95px]" />
        </colgroup>
        <thead>
          <tr className="h-[14px] bg-[#d3edf7]">
            <th className="border border-[#4aa8c8] p-0 font-semibold">Concepto</th>
            <th className="border border-[#4aa8c8] p-0 font-semibold">Importe</th>
          </tr>
        </thead>
        <tbody>
          <tr className="h-[14px]"><td className="border-r border-[#4aa8c8] p-0 pl-1.5">Alquiler de local del mes de diciembre</td><td className="p-0 pr-7 text-right">800,00 €</td></tr>
          <tr className="h-[14px]"><td className="border-r border-[#4aa8c8] p-0 pl-1.5">IVA 21% s/ 800,00</td><td className="p-0 pr-7 text-right">168,00 €</td></tr>
          <tr className="h-[13px]"><td className="border-r border-[#4aa8c8] p-0" /><td className="p-0" /></tr>
          <tr className="h-[13px]"><td className="border-r border-[#4aa8c8] p-0 pl-1.5">Subtotal</td><td className="p-0 pr-7 text-right font-bold">968,00 €</td></tr>
          <tr className="h-[13px]"><td className="border-r border-[#4aa8c8] p-0 pl-1.5"><mark className="bg-[#5f9bd0] text-[#234]">Retención</mark> a cuenta del IRPF</td><td className="p-0" /></tr>
          <tr className="h-[23px] align-top"><td className="border-r border-[#4aa8c8] p-0 pl-1.5 pt-px">19% s/ 800,00</td><td className="p-0 pr-7 pt-px text-right">−152,00 €</td></tr>
          <tr className="h-[14px] border-y border-[#4aa8c8] font-semibold"><td className="border-r border-[#4aa8c8] p-0 pr-2 text-right">Total importe</td><td className="p-0 pr-7 text-right font-bold">816,00 €</td></tr>
          <tr className="h-[14px] border-b border-[#4aa8c8] bg-[#d3edf7]"><th colSpan={2} className="p-0 font-semibold">Observaciones</th></tr>
          <tr className="h-[27px] align-top"><td colSpan={2} className="p-0 pl-1 pt-px">Forma de pago: en efectivo a la recepción de la factura</td></tr>
        </tbody>
      </table>
      <figcaption className="pl-[33px] pt-[5px]">
        <div className="flex h-9">
          <em className="w-[38px] pt-1">Recibí</em>
          <Signature />
        </div>
        <p className="pt-px"><em className="mr-1">Firmado:</em> Juan Román Acebrón</p>
        <p><em>NIF:</em> 25034027-M</p>
      </figcaption>
      <span className="absolute left-[339px] top-[39px]"><HeadIcon /></span>
    </figure>
  );
}

function WordWindow() {
  return (
    <section className="flex min-h-0 flex-1 flex-col border border-[#9a9a9a] border-t-0 bg-[#e6e6e6] font-['Open_Sans','Noto_Sans',sans-serif] text-[9px] text-[#444]">
      <header className="flex h-[29px] shrink-0 items-center whitespace-nowrap bg-[#2a5699] pl-[17px] pr-[13px] text-[10px] text-[#a9c1e6]">
        <label className="flex items-center gap-[3px]">
          Autoguardado
          <input type="checkbox" className="h-3.5 w-8 appearance-none rounded-full border border-[#c8d8f0] bg-[radial-gradient(circle_at_7px_6px,#ffffff_3px,transparent_4px)]" />
        </label>
        <button aria-label="Guardar" className="ml-2.5"><Save className="size-[15px]" strokeWidth={1.8} /></button>
        <button aria-label="Deshacer" className="ml-2 text-[#6587bd]"><Undo2 className="size-3.5" strokeWidth={1.8} /></button>
        <ChevronDown className="ml-1 size-2 text-[#6587bd]" />
        <button aria-label="Rehacer" className="ml-1.5 text-[#6587bd]"><RotateCw className="size-[13px]" strokeWidth={1.8} /></button>
        <button aria-label="Vista previa" className="ml-[11px]">
          <svg viewBox="0 0 14 14" className="size-3.5" fill="none" stroke="currentColor" aria-hidden="true">
            <path d="M6 13H1.500V1H7l3 3v2M7 1v3h3M6 8.500h7v4H6zM7.500 8.500V6.500h4v2M7.500 11h4M3.500 5H6M3.500 7.500h1" strokeWidth="1.200" />
          </svg>
        </button>
        <svg viewBox="0 0 8 8" className="ml-[11px] size-[7px]" fill="none" stroke="currentColor" aria-hidden="true"><path d="M1 1h6M1 3.500h6L4 6.500z" /></svg>
        <h1 className="ml-7 flex min-w-0 flex-1 items-center">
          <span>PST...</span>
          <span className="ml-3">- &nbsp;Gua...</span>
          <Caret className="ml-[9px]" />
        </h1>
        <button aria-label="Buscar"><Search className="size-3 -scale-x-100" strokeWidth={1.8} /></button>
        <span className="ml-7">Daniel Peláez Ordóñez</span>
        <span className="ml-2 flex size-[19px] items-center justify-center rounded-full bg-[#04548e] text-[8px] font-semibold text-white">DP</span>
        <button aria-label="Presentación de la cinta" className="ml-[23px]">
          <svg viewBox="0 0 12 10" className="h-2.5 w-3" fill="none" stroke="currentColor" aria-hidden="true"><path d="M.5.5h11v9H.5zM.5 2.500h11M6 8V4M4.500 5.500L6 4l1.500 1.500" /></svg>
        </button>
        <button aria-label="Minimizar" className="ml-7"><Minus className="size-[11px]" strokeWidth={1.8} /></button>
        <button aria-label="Maximizar" className="ml-7"><Square className="size-[11px]" strokeWidth={2} /></button>
        <button aria-label="Cerrar" className="ml-[26px]"><X className="size-3" strokeWidth={2} /></button>
      </header>

      <nav className="flex h-[25px] shrink-0 items-center overflow-hidden whitespace-nowrap bg-[#f3f2f0] pr-2.5 text-[11px]">
        {wordTabs.map(([label, width]) => (
          <a key={label} href="#" className={`flex h-4 shrink-0 items-center justify-center border-[#dddbd9] ${width}`}>{label}</a>
        ))}
        <a href="#" className="ml-[5px] min-w-0 flex-1 overflow-hidden">Foxit Reader PD</a>
        <button aria-label="Más fichas" className="flex h-full w-[9px] items-center justify-center bg-white"><ChevronRight className="size-[7px]" /></button>
      </nav>

      <div className="flex h-[80px] shrink-0 border-b border-[#cfcdcb] bg-[#f3f2f0] pt-1">
        <WordGroup title="Ajustar" className="w-[255px]">
          <WordTool className="w-[46px]" icon={<PictureIcon variant="split" />} lines={["Quitar", "fondo"]} />
          <span className="h-[52px] w-px bg-[#d8d6d4]" />
          <WordTool className="w-[62px]" icon={<SunIcon />} lines={["Correcciones"]} caret />
          <div className="flex w-[108px] shrink-0 flex-col whitespace-nowrap pl-0.5">
            <button className="flex h-5 items-center gap-0.5"><PictureIcon variant="blue" />Color<ChevronDown className="size-2" /></button>
            <button className="flex h-5 items-center gap-0.5"><PictureIcon variant="half" />Efectos artísticos<ChevronDown className="size-2" /></button>
            <button className="flex h-5 items-center gap-0.5"><PictureIcon variant="grey" />Transparencia<ChevronDown className="size-2" /></button>
          </div>
          <div className="flex flex-col">
            <button aria-label="Comprimir imágenes" className="flex h-5 items-center"><SmallPicture kind="compress" /></button>
            <button aria-label="Cambiar imagen" className="flex h-5 items-center gap-0.5"><SmallPicture kind="change" /><ChevronDown className="size-2" /></button>
            <button aria-label="Restablecer imagen" className="flex h-5 items-center gap-0.5"><SmallPicture kind="reset" /><ChevronDown className="size-2" /></button>
          </div>
        </WordGroup>
        <WordGroup title="Estilos de imagen" className="w-[92px]" launcher>
          <button className="flex w-[60px] flex-col items-center pt-0.5 text-[9px] leading-[13px]">
            <span className="flex h-[26px] items-center"><PictureIcon variant="brush" /></span>
            <span className="pt-0.5">Estilos</span>
            <span className="flex items-center gap-0.5">rápidos<ChevronDown className="size-2" /></span>
          </button>
          <div className="-ml-1 flex flex-col">
            <button aria-label="Contorno" className="flex h-[19px] items-center gap-[3px]"><OutlinePen /><ChevronDown className="size-2" /></button>
            <button aria-label="Efectos" className="flex h-[19px] items-center gap-[3px]"><EffectBox /><ChevronDown className="size-2" /></button>
            <button aria-label="Diseño de imagen" className="flex h-5 items-center gap-[3px]"><SmallPicture kind="layout" /><ChevronDown className="size-2" /></button>
          </div>
        </WordGroup>
        <WordGroup title="Accesibilidad" className="w-[64px]">
          <WordTool className="w-full" icon={<PictureIcon variant="alt" />} lines={["Texto", "alternativo"]} />
        </WordGroup>
        <WordGroup title="" className="w-[57px]">
          <button className="flex w-full flex-col items-center text-[9px] leading-[13px]">
            <span className="flex size-[25px] items-center justify-center border border-[#e2e0de] bg-white"><ArrangeIcon /></span>
            <span className="pt-[3px]">Organizar</span>
            <ChevronDown className="mt-0.5 size-2" />
          </button>
        </WordGroup>
        <WordGroup title="Tamaño" className="w-[134px]" launcher>
          <WordTool className="w-[50px]" icon={<CropIcon />} lines={["Recortar"]} caret />
          <div className="flex min-w-0 flex-1 flex-col gap-2 pr-1.5 pt-1.5">
            {[
              { id: "alto", label: "Alto", value: "10,1 cm", vertical: true },
              { id: "ancho", label: "Ancho", value: "15 cm", vertical: false },
            ].map((field) => (
              <div key={field.id} className="flex h-[19px] items-center">
                <label htmlFor={field.id} aria-label={field.label}><SizeIcon vertical={field.vertical} /></label>
                <div className="ml-0.5 flex h-[19px] min-w-0 flex-1 items-center border border-[#dddbd9] bg-white pr-[3px]">
                  <input id={field.id} defaultValue={field.value} className="w-0 min-w-0 flex-1 bg-transparent pl-0.5 text-[9px]" />
                  <span className="flex flex-col"><ChevronUp className="size-2" /><ChevronDown className="size-2" /></span>
                </div>
              </div>
            ))}
          </div>
        </WordGroup>
        <button aria-label="Contraer la cinta" className="ml-auto mr-1.5 self-end"><ChevronUp className="size-2.5" strokeWidth={2.5} /></button>
      </div>

      <div className="h-[3px] shrink-0 bg-[#e6e6e6]" />
      <Ruler />

      <div className="min-h-0 flex-1 overflow-hidden pb-3 pl-[30px] pr-6">
        <article className="h-full overflow-hidden bg-white pl-[93px] pt-[5px] font-['Liberation_Serif',serif] text-[11px] leading-[13px] text-black">
          <h2 className="text-[13px] font-bold leading-[15px] underline">DEUDORES varios:</h2>
          <p className="h-[15px]">1 DE DICIEMBRE</p>
          <Invoice />
          <div className="h-[30px]" />
          <p className="font-bold">31-12 Las existencias finales:</p>
          <p>-MERCADERÍAS A: 0</p>
          <p>-MERCADERIAS B: 500 EUR</p>
          <p className="pt-3 font-bold">31-12 liquide IVA, rellene modelo 303</p>
          <p>CIERRE LA CONTABILIDAD</p>
          <p className="pt-3 font-bold">Suba: DIARIO EN BORRADOR, BALANCE MODELO SIMPLE, MODELO 303</p>
        </article>
      </div>

      <footer className="flex h-[19px] shrink-0 items-center whitespace-nowrap bg-[#f3f2f0] pl-1.5 pr-4 text-[8px] text-[#555]">
        <span className="w-[52px]">Sección: 1</span>
        <span className="w-[70px]">Página 8 de 8</span>
        <span className="w-[66px]">117 palabras</span>
        <svg viewBox="0 0 12 10" className="h-2.5 w-3" fill="none" stroke="#555" aria-hidden="true"><path d="M1 1.500h4l1 1 1-1h4v3M6 2.500v6M1 1.500v7h4M7.500 6l3 3M10.500 6l-3 3" /></svg>
        <span className="ml-[15px] flex-1">Español (España)</span>
        <button className="flex items-center gap-0.5">
          <svg viewBox="0 0 12 12" className="size-3" fill="none" stroke="#555" aria-hidden="true"><path d="M1 3V1h2M9 1h2v2M1 9v2h2M9 11h2V9M4 2.500h3l2 2v5H4z" /></svg>
          Concentración
        </button>
        <button aria-label="Modo de lectura" className="ml-[21px]">
          <svg viewBox="0 0 12 11" className="h-[11px] w-3" fill="none" stroke="#555" aria-hidden="true"><path d="M6 2C4 .5 2 1 .5 1v8.500C2 9.500 4 9 6 10.500 8 9 10 9.500 11.500 9.500V1C10 1 8 .5 6 2zM6 2v8M2 3.500h2.500M2 5.500h2.500M2 7.500h2.500M7.500 3.500H10M7.500 5.500H10M7.500 7.500H10" /></svg>
        </button>
        <button aria-label="Diseño de impresión" className="ml-[11px] flex h-full w-[33px] items-center justify-center bg-[#cfcdcb]">
          <svg viewBox="0 0 10 12" className="h-3 w-2.5" fill="none" stroke="#444" aria-hidden="true"><path d="M.5.5h9v11h-9zM2.500 3h5M2.500 5h5M2.500 7h5M2.500 9h5" /></svg>
        </button>
        <button aria-label="Diseño web" className="ml-[11px]">
          <svg viewBox="0 0 12 12" className="size-3" fill="none" stroke="#555" aria-hidden="true"><path d="M6 10.500H.5V1h10v4M.5 3.500h10M2.500 5.500H6M2.500 7.500h3" /><circle cx="8.500" cy="8.500" r="2.800" fill="#555" /><path d="M8.500 7v3" stroke="#fff" /></svg>
        </button>
        <Minus className="ml-3 size-2.5" />
        <input type="range" aria-label="Zoom" defaultValue={50} className="mx-0.5 h-3 w-[84px] appearance-none bg-[linear-gradient(#aaa,#aaa)] bg-[length:100%_1px] bg-center bg-no-repeat [&::-webkit-slider-thumb]:h-2.5 [&::-webkit-slider-thumb]:w-1 [&::-webkit-slider-thumb]:appearance-none [&::-webkit-slider-thumb]:bg-[#666]" />
        <Plus className="size-2.5" />
        <span className="ml-2.5">100 %</span>
      </footer>
    </section>
  );
}

/* ---------- taskbar ---------- */

function TaskButton({ label, running, active, children }: { label: string; running?: boolean; active?: boolean; children: ReactNode }) {
  return (
    <button
      aria-label={label}
      className={`flex h-full items-center justify-center justify-self-center border-b-2 ${active ? "w-10 bg-[#efefef]" : "w-[34px]"} ${running || active ? "border-[#1668b8]" : "border-transparent"}`}
    >
      {children}
    </button>
  );
}

function Taskbar() {
  return (
    <footer className="flex h-[34px] shrink-0 items-center whitespace-nowrap bg-[linear-gradient(to_right,#d3d3d3_0%,#d8d8d8_24%,#eaeaea_30%,#ececec_70%,#d8d8d8_76%,#d4d4d4_100%)] font-['Open_Sans','Noto_Sans',sans-serif] text-[9px] text-[#222]">
      <div className="grid h-full w-[330px] grid-cols-8">
        <TaskButton label="Inicio">
          <svg viewBox="0 0 14 14" className="size-3.5" aria-hidden="true"><path d="M0 2.200l6-.9v5.400H0zM6.700 1.200L14 0v6.700H6.700zM0 7.300h6v5.400l-6-.9zM6.700 7.300H14V14l-7.300-1.100z" /></svg>
        </TaskButton>
        <TaskButton label="Buscar"><Search className="size-5 -scale-x-100" strokeWidth={2} /></TaskButton>
        <TaskButton label="Explorador de archivos" running>
          <svg viewBox="0 0 20 18" className="h-[18px] w-5" aria-hidden="true"><path d="M1 1.500h7l1.500 2H19V16H1z" fill="#e9b84a" /><path d="M1 5.500h18V16H1z" fill="#fbd975" /><path d="M4.500 17v-6h11v6h-3v-3.500h-5V17z" fill="#3f97cf" /></svg>
        </TaskButton>
        <TaskButton label="Chrome">
          <svg viewBox="0 0 20 20" className="size-5" aria-hidden="true"><circle cx="10" cy="10" r="10" fill="#3aa757" /><path d="M10 10L1.340 5A10 10 0 0118.660 5z" fill="#e33b2e" /><path d="M10 5h8.660A10 10 0 0110 20l4.330-7.500z" fill="#fbc116" /><path d="M1.340 5A10 10 0 0010 20l4.330-7.500H5.670z" fill="#3aa757" /><circle cx="10" cy="10" r="5" fill="#fff" /><circle cx="10" cy="10" r="3.900" fill="#3b7de8" /></svg>
        </TaskButton>
        <TaskButton label="Word" running>
          <svg viewBox="0 0 20 18" className="h-[18px] w-5" aria-hidden="true"><path d="M5 0h15v5H5z" fill="#4ba3e8" /><path d="M5 4.500h15V9H5z" fill="#2b7cd3" /><path d="M5 9h15v4.500H5z" fill="#1d5bb5" /><path d="M5 13.500h15V18H5z" fill="#153f84" /><path d="M0 4h10.500v10H0z" fill="#17479b" /><path d="M2 6.500l1.500 5 1.700-4.500 1.700 4.500 1.500-5" fill="none" stroke="#fff" strokeWidth="1.200" /></svg>
        </TaskButton>
        <TaskButton label="Contasol" active><CsLogo className="size-5 rounded pb-0.5 text-[12px]" /></TaskButton>
        <TaskButton label="Grabador" running>
          <svg viewBox="0 0 18 18" className="size-[18px]" aria-hidden="true"><path d="M1 7c0-3 1-5 3-5 1-1.500 3-1.500 4-.5C10 .5 12 .8 12.500 2 15 1.500 17 4 17 7c0 5-3 8-6 9.500-1 .7-3 .7-4 0C4 15 1 12 1 7z" fill="#e9692c" stroke="#5d2410" strokeWidth="1.200" /><path d="M5 3v5M8.500 2v6M12 3v5M3 8c3 2 8 2 12-1M7 8.500c0 2 2 3 5 2" fill="none" stroke="#5d2410" strokeWidth="1.200" /></svg>
        </TaskButton>
        <TaskButton label="Calculadora" running>
          <svg viewBox="0 0 16 20" className="h-5 w-4" aria-hidden="true"><path d="M0 0h16v20H0z" fill="#6d7f8e" /><path d="M2 1.500h12V6H2z" fill="#4fc4ec" /><path d="M2 8h3v2.500H2zM6.500 8h3v2.500h-3zM2 12h3v2.500H2zM6.500 12h3v2.500h-3zM2 16h3v2.500H2zM6.500 16h3v2.500h-3zM11 8h3v2.500h-3z" fill="#fff" /><path d="M11 12h3v6.500h-3z" fill="#1a4d80" /></svg>
        </TaskButton>
      </div>
      <div className="flex-1" />
      <svg viewBox="0 0 20 20" className="size-[18px]" aria-hidden="true"><path d="M11 1c8 2 9 10 5 14.500C12 20 4 19.500 1 14c6 1 13-3 10-13z" fill="#f2a42f" /></svg>
      <span className="ml-2 text-[11px]">6°C&nbsp; Despejado</span>
      <div className="ml-5 flex items-center gap-1.5">
        <ChevronUp className="size-3.5" />
        <svg viewBox="0 0 14 14" className="ml-0.5 size-3.5" fill="none" stroke="#222" aria-hidden="true"><path d="M2 4.500h7v6H2zM9 6.500l3-1.500v5L9 8.500M3 2.500h5M3 12.500h5" /></svg>
        <svg viewBox="0 0 14 10" className="h-2.5 w-3.5" aria-hidden="true"><path d="M4 10a3.500 3.500 0 01-.5-6.500C5-.5 10-.5 11 3.500c4 .5 4 6 0 6.500z" fill="#1683dc" /><path d="M3 10l5-6 6 4c-1 1.500-2 2-3 2z" fill="#35b1f4" /></svg>
        <svg viewBox="0 0 14 10" className="h-2.5 w-3.5" aria-hidden="true"><path d="M3 2h10v7H3zM13 4h1v3h-1zM0 0h4v3H3v2H1V3H0z" /></svg>
        <svg viewBox="0 0 14 14" className="size-3.5" aria-hidden="true"><rect width="14" height="14" rx="1" fill="#e77a2b" /><path d="M5.500 2v4M3 5.500l8-1.500-5 3.500h4l-4 4M3.500 8.500v2M9 11h2" fill="none" stroke="#fff" strokeWidth="1.200" /></svg>
        <svg viewBox="0 0 14 14" className="size-3.5" aria-hidden="true"><path d="M1 2.500L7 1l5.500 1.500V7c0 3-2.500 5-5.500 6.500C4 12 1 10 1 7z" fill="#fff" stroke="#333" /><path d="M7 1v12M1 7h11.500" stroke="#333" /><path d="M10.500 7l3.500 7H7z" fill="#f1b929" /></svg>
        <svg viewBox="0 0 14 12" className="h-3 w-3.5" fill="none" stroke="#444" aria-hidden="true"><path d="M1 4.500h2L6 2v8L3 7.500H1zM8 4.500c.8 1 .8 2 0 3M10 3c1.500 2 1.500 4 0 6M12 2c2 2.500 2 5.500 0 8" /></svg>
        <svg viewBox="0 0 10 14" className="mx-0.5 h-3.5 w-2.5" fill="none" aria-hidden="true"><rect x="3" y="0" width="4.500" height="9" rx="2" fill="#111" /><path d="M1 6c0 5 8.500 5 8.500 0M5 10v3M3 13.500h4" stroke="#111" /></svg>
        <svg viewBox="0 0 14 14" className="ml-1 size-3.5" fill="none" stroke="#222" aria-hidden="true"><path d="M5 8l6-6.500c1.500-.5 2 .5 1.500 1.500L7 9.500 4.500 10.500zM5 8C2 6 0 8 .8 10.500 2 13 5 11 6.500 9M8 11c1 1.500 3 .5 5-1.500" /></svg>
      </div>
      <div className="w-[73px] text-center leading-[15px]">
        <time className="block">13:59</time>
        <time className="block">12/12/2025</time>
      </div>
      <button aria-label="Notificaciones" className="ml-1 mr-[21px]">
        <svg viewBox="0 0 14 14" className="size-3.5" aria-hidden="true"><path d="M0 1h13.500v10H6l-3 2.500V11H0z" fill="#111" /><path d="M2.500 4h8.500M2.500 6.500h6M2.500 9h4" stroke="#fff" /><circle cx="10.500" cy="9.500" r="2.500" fill="#111" stroke="#ddd" strokeWidth=".8" /></svg>
      </button>
    </footer>
  );
}

export default function App() {
  return (
    <main className="flex h-screen w-full flex-col overflow-hidden bg-white">
      <div className="grid min-h-0 flex-1 grid-cols-[549fr_16px_715fr] grid-rows-[minmax(0,1fr)]">
        <AccountingWindow />
        <BackgroundStrip />
        <div className="flex min-w-0 flex-col pt-[3px]">
          <WordWindow />
          <div className="flex h-[19px] shrink-0 items-center justify-end gap-1 pr-1.5">
            <button aria-label="Vista de detalles" className="flex h-[19px] w-[18px] items-center justify-center border border-[#4fb0d8] bg-[#cfeaf6]">
              <svg viewBox="0 0 12 10" className="h-2.5 w-3" fill="none" stroke="#668" aria-hidden="true"><path d="M0 1.500h3M0 5h3M0 8.500h3M5 1.500h3M9 1.500h3M5 5h3M9 5h3M5 8.500h3M9 8.500h3" /></svg>
            </button>
            <button aria-label="Vista de miniaturas">
              <svg viewBox="0 0 12 10" className="h-2.5 w-3" aria-hidden="true"><path d="M.5 1h11v8H.5z" fill="#cfe3f2" stroke="#8aa" /><path d="M1.500 4c3-1 5 2 9 1v3h-9z" fill="#2a6b8e" /></svg>
            </button>
          </div>
        </div>
      </div>
      <Taskbar />
    </main>
  );
}
